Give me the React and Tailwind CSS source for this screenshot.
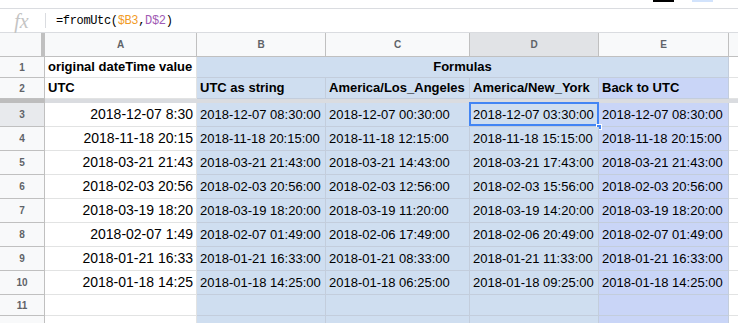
const ROWS = [
  ['2018-12-07 8:30', '2018-12-07 08:30:00', '2018-12-07 00:30:00', '2018-12-07 03:30:00', '2018-12-07 08:30:00'],
  ['2018-11-18 20:15', '2018-11-18 20:15:00', '2018-11-18 12:15:00', '2018-11-18 15:15:00', '2018-11-18 20:15:00'],
  ['2018-03-21 21:43', '2018-03-21 21:43:00', '2018-03-21 14:43:00', '2018-03-21 17:43:00', '2018-03-21 21:43:00'],
  ['2018-02-03 20:56', '2018-02-03 20:56:00', '2018-02-03 12:56:00', '2018-02-03 15:56:00', '2018-02-03 20:56:00'],
  ['2018-03-19 18:20', '2018-03-19 18:20:00', '2018-03-19 11:20:00', '2018-03-19 14:20:00', '2018-03-19 18:20:00'],
  ['2018-02-07 1:49', '2018-02-07 01:49:00', '2018-02-06 17:49:00', '2018-02-06 20:49:00', '2018-02-07 01:49:00'],
  ['2018-01-21 16:33', '2018-01-21 16:33:00', '2018-01-21 08:33:00', '2018-01-21 11:33:00', '2018-01-21 16:33:00'],
  ['2018-01-18 14:25', '2018-01-18 14:25:00', '2018-01-18 06:25:00', '2018-01-18 09:25:00', '2018-01-18 14:25:00'],
]

const COLS = [
  { key: 'A', w: 'w-[152px]' },
  { key: 'B', w: 'w-[129px]' },
  { key: 'C', w: 'w-[144px]' },
  { key: 'D', w: 'w-[129px]' },
  { key: 'E', w: 'w-[130px]' },
]

const blue = 'bg-[#cfdef0] border-[#c3cddc]'
const lav = 'bg-[#c9d5f7] border-[#c3cddc]'

function RowHead({ n, h, active }) {
  return (
    <div
      className={`${h} w-[45px] shrink-0 flex items-center justify-center border-r border-b border-[#c0c0c0] text-[10px] font-bold text-[#5f6368] ${
        active ? 'bg-[#e8eaed]' : 'bg-[#f8f9fa]'
      }`}
    >
      {n}
    </div>
  )
}

function Cell({ w, tone, className = '', children }) {
  return (
    <div
      className={`${w} shrink-0 flex items-center overflow-hidden whitespace-nowrap border-r border-b ${
        tone === 'blue' ? blue : tone === 'lav' ? lav : 'bg-white border-[#e2e3e3]'
      } ${className}`}
    >
      {children}
    </div>
  )
}

function Filler() {
  return <div className="flex-1 border-b border-[#e2e3e3] bg-white" />
}

export default function App() {
  return (
    <div className="w-[738px] h-[323px] overflow-hidden bg-white text-black font-['Liberation_Sans',Arial,sans-serif]">
      {/* toolbar edge */}
      <div className="h-[8px] flex">
        <div className="ml-[653px] w-[21px] h-[2px] bg-black" />
        <div className="ml-[18px] w-[21px] h-[2px] bg-[#d2e3fc]" />
      </div>

      {/* formula bar */}
      <div className="h-[25px] flex items-center border-t border-b border-[#dadce0]">
        <div className="w-[45px] flex items-center justify-center pr-[2px] text-[20px] italic text-[#c4c4c4] font-['Liberation_Serif',serif] leading-none">
          fx
        </div>
        <div className="w-px h-[15px] bg-[#dadce0]" />
        <div className="pl-[10px] text-[12px] tracking-[-0.35px] font-['Liberation_Mono',monospace]">
          =fromUtc(<span className="text-[#f29b26]">$B3</span>,<span className="text-[#a05bb4]">D$2</span>)
        </div>
      </div>

      {/* column headers */}
      <div className="flex h-[24px] bg-[#f8f9fa]">
        <div className="w-[45px] shrink-0 flex border-b border-[#c0c0c0]">
          <div className="w-[41px]" />
          <div className="w-[4px] bg-[#c0c0c0]" />
        </div>
        {COLS.map((c) => (
          <div
            key={c.key}
            className={`${c.w} shrink-0 flex items-center justify-center border-r border-b border-[#c0c0c0] text-[10px] font-bold text-[#5f6368] ${
              c.key === 'D' ? 'bg-[#e1e3e6]' : ''
            }`}
          >
            {c.key}
          </div>
        ))}
        <div className="flex-1 border-b border-[#c0c0c0]" />
      </div>

      {/* row 1 */}
      <div className="flex h-[21px]">
        <RowHead n={1} h="h-[21px]" />
        <Cell w="w-[152px]" className="pl-[3px] text-[13px] font-bold">original dateTime value</Cell>
        <Cell w="w-[532px]" tone="blue" className="justify-center text-[13px] font-bold">Formulas</Cell>
        <Filler />
      </div>

      {/* row 2 */}
      <div className="flex h-[21px]">
        <RowHead n={2} h="h-[21px]" />
        <Cell w="w-[152px]" className="pl-[3px] text-[13px] font-bold">UTC</Cell>
        <Cell w="w-[129px]" tone="blue" className="pl-[3px] text-[13px] font-bold">UTC as string</Cell>
        <Cell w="w-[144px]" tone="blue" className="pl-[3px] text-[13px] font-bold">America/Los_Angeles</Cell>
        <Cell w="w-[129px]" tone="blue" className="pl-[3px] text-[13px] font-bold">America/New_York</Cell>
        <Cell w="w-[130px]" tone="lav" className="pl-[3px] text-[13px] font-bold">Back to UTC</Cell>
        <Filler />
      </div>

      {/* frozen divider */}
      <div className="flex h-[4px]">
        <div className="w-[45px] bg-[#bdbdbd]" />
        <div className="flex-1 bg-[#dadce0]" />
      </div>

      {ROWS.map((r, i) => (
        <div key={i} className="flex h-[24px]">
          <RowHead n={i + 3} h="h-[24px]" active={i === 0} />
          <Cell w="w-[152px]" className="justify-end pr-[3px] text-[14px]">{r[0]}</Cell>
          <Cell w="w-[129px]" tone="blue" className="pl-[3px] text-[13px]">{r[1]}</Cell>
          <Cell w="w-[144px]" tone="blue" className="pl-[3px] text-[13px]">{r[2]}</Cell>
          <Cell w="w-[129px]" tone="blue" className="relative pl-[3px] text-[13px] overflow-visible">
            {r[3]}
            {i === 0 && (
              <>
                <div className="absolute -left-px -top-px w-[130px] h-[24px] border-2 border-[#4285f4]" />
                <div className="absolute -right-[4px] -bottom-[4px] w-[6px] h-[6px] bg-[#4285f4] border border-white" />
              </>
            )}
          </Cell>
          <Cell w="w-[130px]" tone="lav" className="pl-[3px] text-[13px]">{r[4]}</Cell>
          <Filler />
        </div>
      ))}

      {/* rows 11-12 */}
      {[11, null].map((n, i) => (
        <div key={i} className="flex h-[21px]">
          <RowHead n={n} h="h-[21px]" />
          <Cell w="w-[152px]" />
          <Cell w="w-[129px]" tone="blue" />
          <Cell w="w-[144px]" tone="blue" />
          <Cell w="w-[129px]" tone="blue" />
          <Cell w="w-[130px]" tone="lav" />
          <Filler />
        </div>
      ))}
    </div>
  )
}
